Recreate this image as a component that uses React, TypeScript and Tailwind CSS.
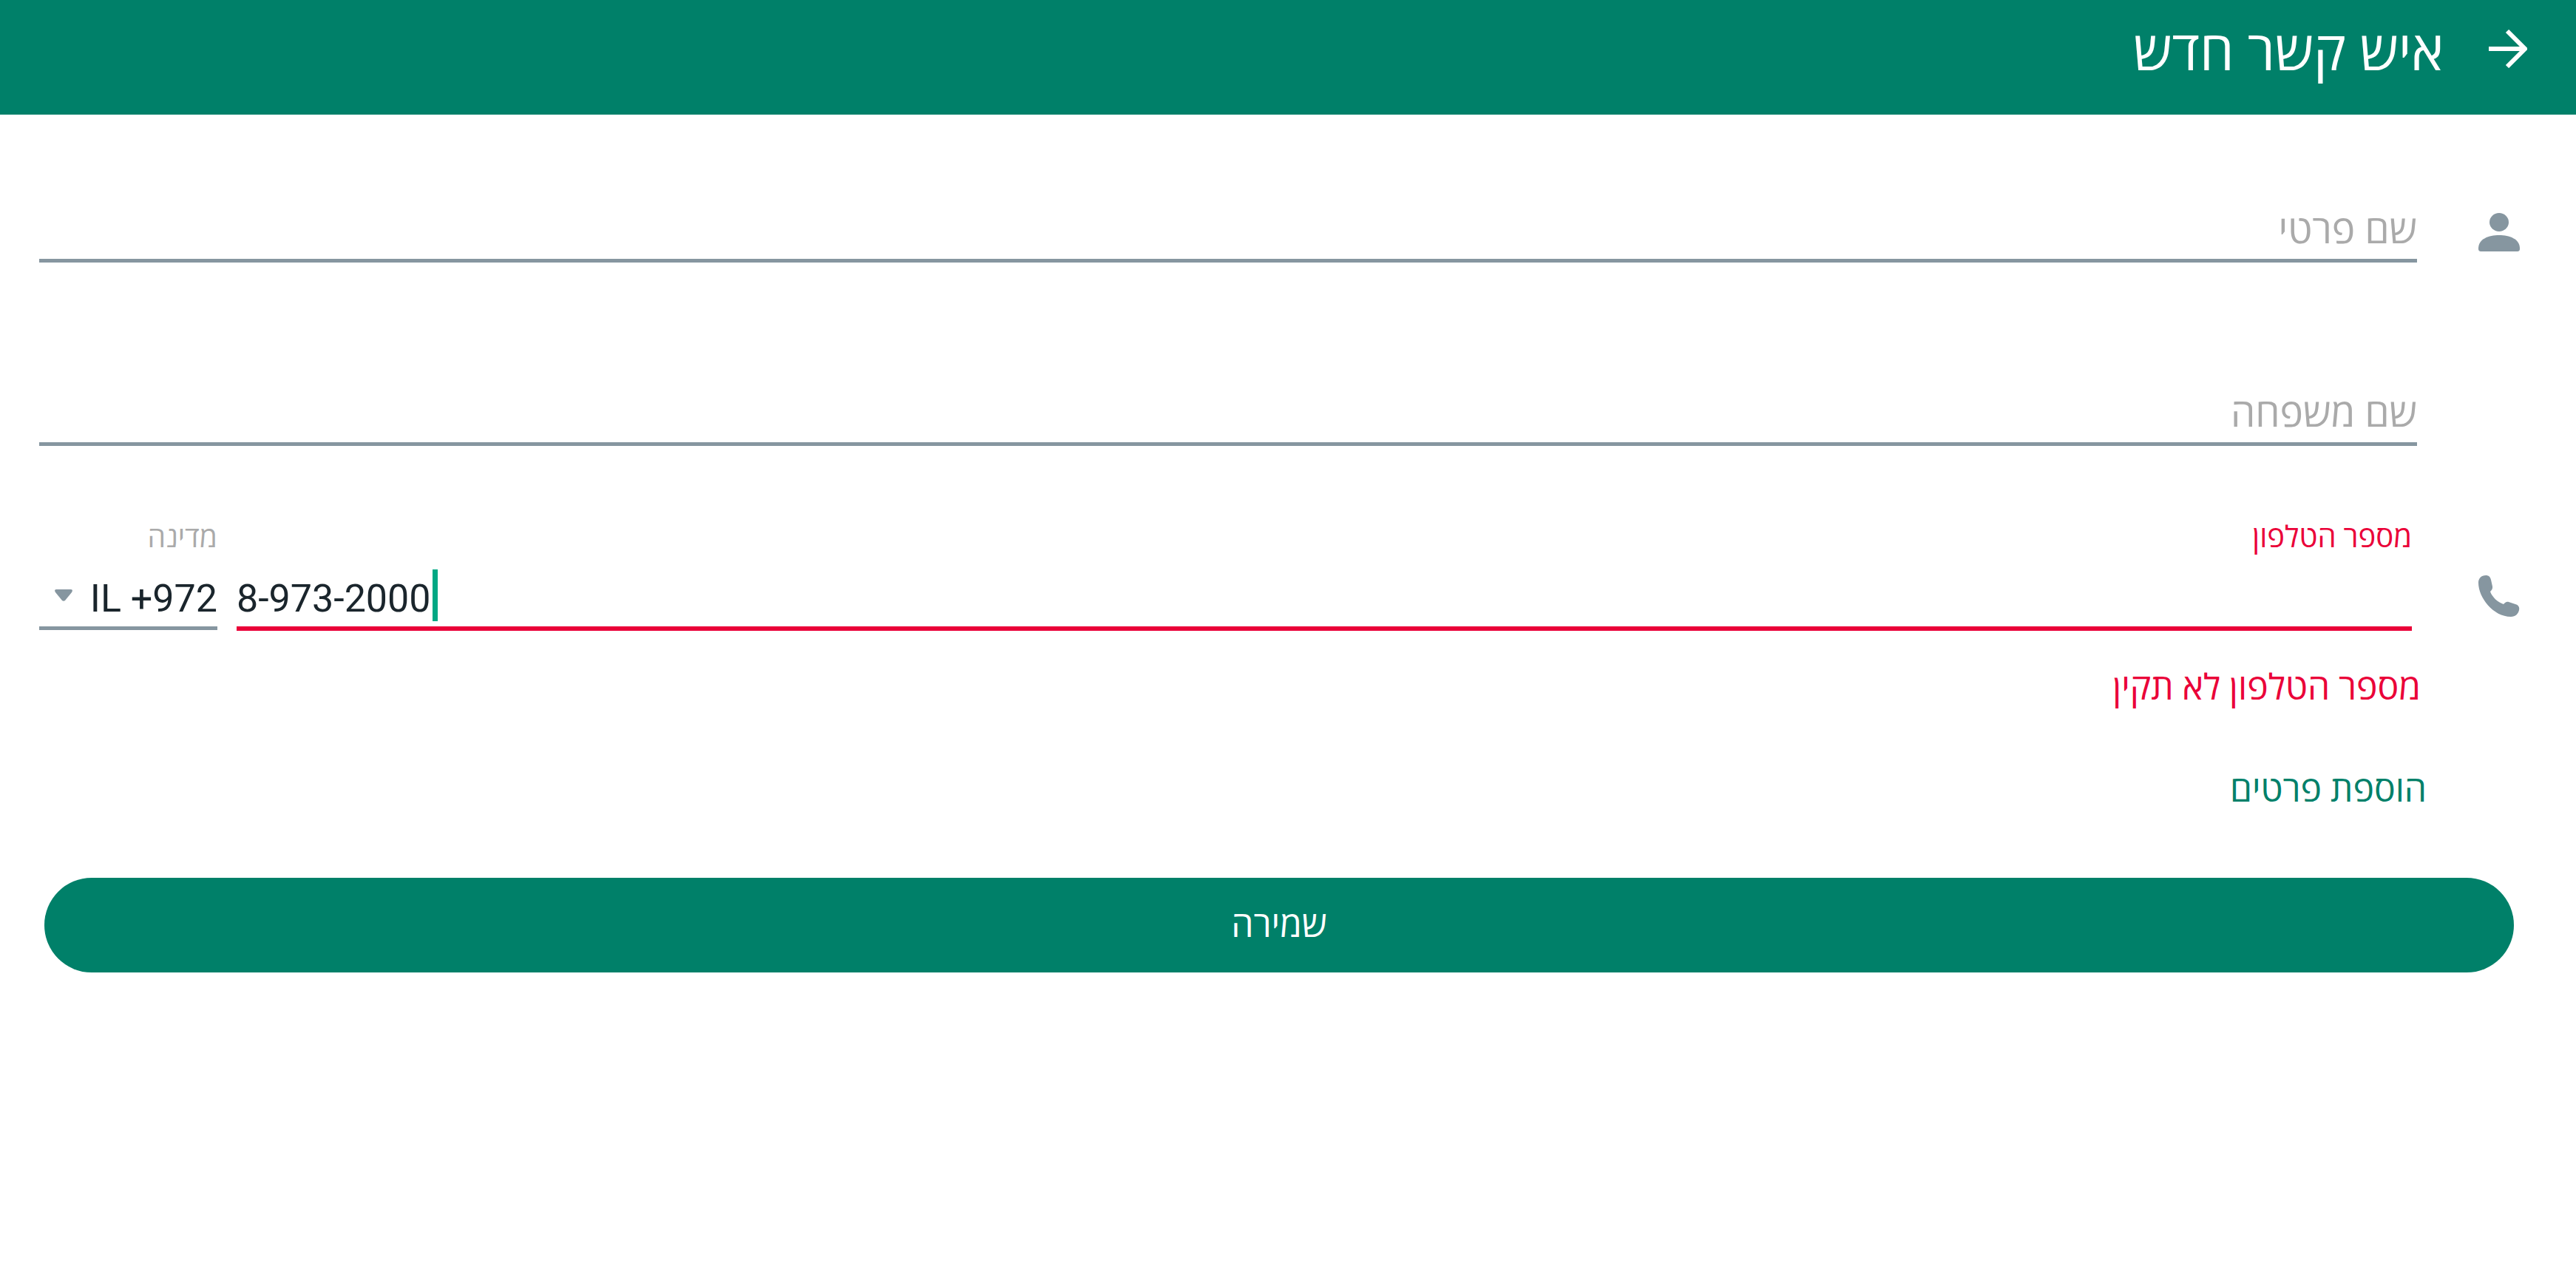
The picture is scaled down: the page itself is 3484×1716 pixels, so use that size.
const hebrew = "font-['Roboto','Open_Sans','Noto_Sans',sans-serif]";

function ArrowIcon() {
  return (
    <svg viewBox="0 0 52 52" className="h-[52px] w-[52px]" fill="none" stroke="#fff" strokeWidth="6" aria-hidden>
      <path d="M0 26H49M25 2L49 26L25 50" />
    </svg>
  );
}

function PersonIcon() {
  return (
    <svg viewBox="0 0 56 52" className="h-[52px] w-[56px]" fill="#8696a0" aria-hidden>
      <ellipse cx="28" cy="12.5" rx="13" ry="12.5" />
      <path d="M0 48C0 35 14 30 28 30S56 35 56 48C56 51 55 52 52 52H4C1 52 0 51 0 48Z" />
    </svg>
  );
}

function PhoneIcon() {
  return (
    <svg viewBox="0 0 56 56" className="h-[56px] w-[56px]" fill="#8696a0" aria-hidden>
      <path d="M10 0C14 0 16 2 17 6L19 15C19.5 18 18 20 16 22C19 30 26 36 34 39C36 37 38 35 41 36L50 39C54 40 56 43 55 47C54 52 50 56 44 56C20 56 0 30 0 10C0 4 4 0 10 0Z" />
    </svg>
  );
}

function NameField({ placeholder, icon }: { placeholder: string; icon?: React.ReactNode }) {
  return (
    <div className="flex h-[248px] pl-[53px]">
      <div className="flex w-[215px] shrink-0 justify-end pt-[133px] pl-[83px]">{icon}</div>
      <div className="h-[200px] flex-1 border-b-[5px] border-[#8696a0] pt-[126px]">
        <div className="text-[53px] font-[450] leading-[60px] text-[#aaaaaa]">{placeholder}</div>
      </div>
    </div>
  );
}

export default function App() {
  return (
    <div dir="rtl" className={`min-h-[1716px] bg-white ${hebrew}`}>
      <header className="flex h-[155px] items-center gap-[61px] bg-[#008069] pb-[24px] pr-[66px]">
        <ArrowIcon />
        <h1 className="mt-[8px] text-[74px] font-[450] leading-none text-white">איש קשר חדש</h1>
      </header>

      <NameField placeholder="שם פרטי" icon={<PersonIcon />} />
      <NameField placeholder="שם משפחה" />

      <div className="flex pl-[53px] pt-[56px]">
        <div className="flex w-[222px] shrink-0 justify-end pl-[90px] pt-[71px]">
          <PhoneIcon />
        </div>
        <div className="flex flex-1 gap-[26px]">
          <div className="flex-1">
            <div className="h-[40px] text-[40px] font-[450] leading-[40px] text-[#ea0038]">מספר הטלפון</div>
            <div className="flex h-[106px] items-center justify-end border-b-[6px] border-[#ea0038] pt-[16px]">
              <span dir="ltr" className="mr-[7px] flex items-center text-[52px] leading-[60px] text-[#1a252c]">
                <span className="pt-[10px]">8-973-2000</span>
                <span className="ml-[2px] h-[70px] w-[7px] bg-[#00a884]" />
              </span>
            </div>
          </div>
          <div className="w-[241px]">
            <div className="h-[40px] text-[39px] font-[450] leading-[40px] text-[#aaaaaa]">מדינה</div>
            <div className="flex h-[105px] items-center justify-between border-b-[5px] border-[#8696a0] pl-[21px] pt-[26px]">
              <span dir="ltr" className="text-[52px] leading-[60px] text-[#1a252c]">
                IL +972
              </span>
              <svg viewBox="0 0 24 16" className="mb-[10px] h-[16px] w-[24px]" fill="#8696a0" aria-hidden>
                <path d="M2 0H22C24 0 24.5 2 23 4L14 15C13 16 11 16 10 15L1 4C-.5 2 0 0 2 0Z" />
              </svg>
            </div>
          </div>
        </div>
      </div>

      <div className="mt-[47px] pr-[210px] text-[48px] font-[450] leading-[60px] text-[#ea0038]">מספר הטלפון לא תקין</div>
      <div className="mt-[78px] pr-[202px] text-[48px] font-[450] leading-[60px] text-[#008069]">הוספת פרטים</div>

      <div className="mt-[89px] pl-[60px] pr-[84px]">
        <button className="flex h-[128px] w-full items-center justify-center rounded-full bg-[#008069] text-[48px] font-[450] text-white">
          שמירה
        </button>
      </div>
    </div>
  );
}
